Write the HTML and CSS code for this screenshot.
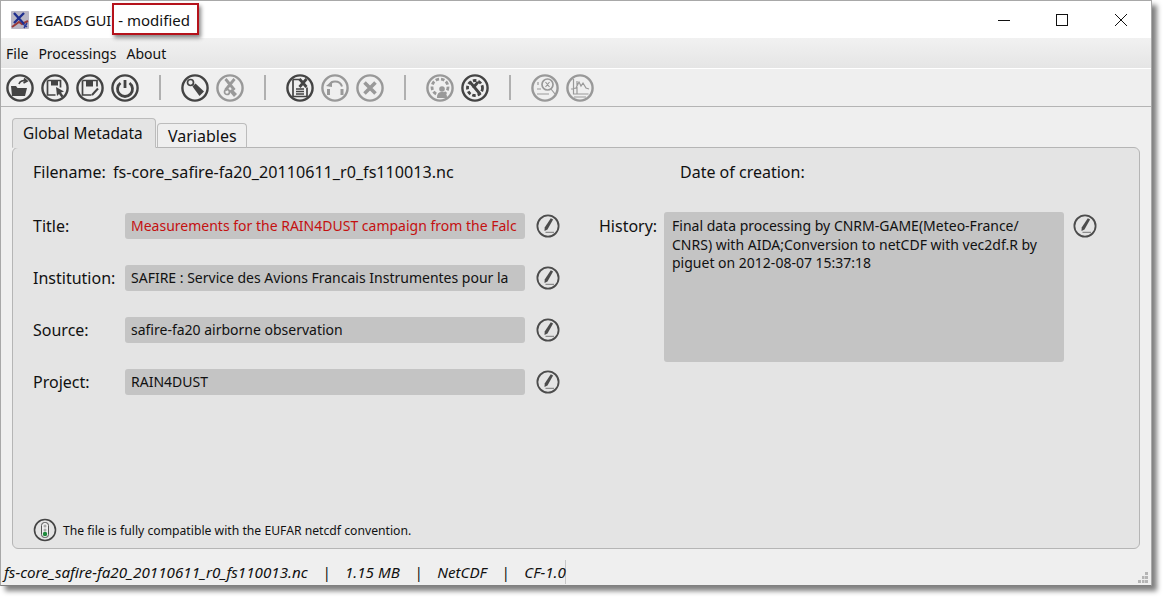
FILE: index.html
```html
<!DOCTYPE html>
<html lang="en">
<head>
<meta charset="utf-8">
<title>EGADS GUI - modified</title>
<link rel="stylesheet" href="styles.css">
</head>
<body>
<svg class="defs" width="0" height="0" aria-hidden="true">
  <defs>
    <symbol id="pen" viewBox="0 0 24 24">
      <circle cx="12" cy="12" r="10.600" fill="none" stroke="#4c4c4c" stroke-width="1.800"/>
      <path d="M14.800 4.300l2.300 1.300-5.600 9.800-3 1.700.2-3.500z" fill="#4c4c4c"/>
      <path d="M9.500 18.300h8.500" stroke="#777" stroke-width="1" fill="none"/>
    </symbol>
  </defs>
</svg>
<div class="window">
  <header class="titlebar">
    <svg class="logo" viewBox="0 0 18 18" width="18" height="18">
      <rect width="18" height="18" rx="1" fill="#b9b6c4"/>
      <path d="M1 16L8 11l3 2 6-3" stroke="#9a3a3a" stroke-width="2" fill="none"/>
      <path d="M3 2l10 11M13 2L3 12" stroke="#1f2f8f" stroke-width="2.400" fill="none"/>
      <path d="M12 13l4 3M16 12l-3 5" stroke="#2a3a9a" stroke-width="1.500" fill="none"/>
    </svg>
    <span class="title-text">EGADS GUI</span>
    <span class="title-mod">- modified</span>
    <div class="controls">
      <div class="ctl"><svg width="14" height="14" viewBox="0 0 14 14"><path d="M1 7.500h12" stroke="#111" fill="none"/></svg></div>
      <div class="ctl"><svg width="14" height="14" viewBox="0 0 14 14"><rect x="1.500" y="1.500" width="11" height="11" stroke="#111" fill="none"/></svg></div>
      <div class="ctl"><svg width="14" height="14" viewBox="0 0 14 14"><path d="M1 1l12 12M13 1L1 13" stroke="#111" fill="none"/></svg></div>
    </div>
  </header>
  <nav class="menubar">
    <span>File</span><span>Processings</span><span>About</span>
  </nav>
  <div class="toolbar">
    <svg class="tool" viewBox="0 0 28 28"><circle cx="14" cy="14" r="12.600"/><path class="f" d="M5 12h5l1.500 2H21l-2 8H6z"/><path class="s" d="M13 10c1-3 4-4 7-3M18 4.500l3 2.500-3.500 2"/></svg>
    <svg class="tool" viewBox="0 0 28 28"><circle cx="14" cy="14" r="12.600"/><path class="s" d="M6.500 6.500h13v7M6.500 6.500v14.500h8"/><rect class="f" x="10" y="6.500" width="7" height="5"/><path class="f" d="M15 13l8 4.500-3 1 2.500 3.500-2 1.500-2.500-3.500-2 2z"/></svg>
    <svg class="tool" viewBox="0 0 28 28"><circle cx="14" cy="14" r="12.600"/><path class="s" d="M6.500 6.500h14.500v6M6.500 6.500v14.500h9"/><rect class="f" x="10" y="6.500" width="7" height="6"/><path class="s w2" d="M16 21l6-6.500"/></svg>
    <svg class="tool" viewBox="0 0 28 28"><circle cx="14" cy="14" r="12.600"/><path class="s w3" d="M14 6v8"/><path class="s w3" d="M9.500 9a7.500 7.500 0 1 0 9 0"/></svg>
    <span class="sep"></span>
    <svg class="tool" viewBox="0 0 28 28"><circle cx="14" cy="14" r="12.600"/><circle class="s" cx="9.500" cy="8.500" r="3"/><path class="f" d="M11.500 12.500l3-3 8.500 8-4.500 4.500z"/></svg>
    <svg class="tool off" viewBox="0 0 28 28"><circle cx="14" cy="14" r="12.600"/><path class="s w3" d="M9.500 5l9 11M18.500 5l-9 11"/><path class="f" d="M13 17l3-2 5 5-3 3z"/><circle class="s" cx="11" cy="18" r="2.500"/></svg>
    <span class="sep"></span>
    <svg class="tool" viewBox="0 0 28 28"><circle cx="14" cy="14" r="12.600"/><path class="s" d="M7 5.500h7M7 5.500v17h14v-9M10 15h8M10 17.500h8M10 20h8"/><path class="s w3" d="M13.500 5l7 8M20.500 5l-7 8"/></svg>
    <svg class="tool off" viewBox="0 0 28 28"><circle cx="14" cy="14" r="12.600"/><path class="s w2" d="M8 12c1-3 3-4.500 6-4.500s6 1.500 7 5"/><path class="f" d="M5 12l6-5v6z"/><rect class="f" x="6" y="15" width="3" height="6"/><rect class="f" x="19.500" y="15" width="3" height="6"/></svg>
    <svg class="tool off" viewBox="0 0 28 28"><circle cx="14" cy="14" r="12.600"/><path class="s w4" d="M8.500 8.500l11 11M19.500 8.500l-11 11"/></svg>
    <span class="sep"></span>
    <svg class="tool off" viewBox="0 0 28 28"><circle cx="14" cy="14" r="12.600"/><circle class="s w3 dash" cx="14" cy="13" r="8"/><circle class="f" cx="16" cy="15" r="2.800"/><path class="f" d="M11 24c0-5 2-6 5-6s5 1 5 6z"/></svg>
    <svg class="tool" viewBox="0 0 28 28"><circle cx="14" cy="14" r="12.600"/><circle class="s w3 dash" cx="14" cy="14" r="7.500"/><path class="s w3" d="M9 8l10 12M12 14l5-6"/></svg>
    <span class="sep"></span>
    <svg class="tool off" viewBox="0 0 28 28"><circle cx="14" cy="14" r="12.600"/><circle class="s" cx="16.500" cy="10.500" r="5.500"/><path class="s w1" d="M14.500 8l4 5M18.500 8l-4 5M20 15l4 5M7 8v3M6 15h4M6 20h12"/></svg>
    <svg class="tool off" viewBox="0 0 28 28"><circle cx="14" cy="14" r="12.600"/><path class="s w1" d="M7.500 5v15h15M11 7v13M5 15l5-1 3-6 2 4 2-3 3 5 3 1M8 23h12"/></svg>
  </div>
  <main class="content">
    <div class="tabs">
      <span class="tab tab-on">Global Metadata</span>
      <span class="tab">Variables</span>
    </div>
    <section class="panel">
      <div class="topline">
        <span class="file-line"><span class="file-key">Filename:</span><span class="file-name">fs-core_safire-fa20_20110611_r0_fs110013.nc</span></span>
        <span>Date of creation:</span>
      </div>
      <div class="columns">
        <div class="left">
          <div class="row">
            <span class="label">Title:</span>
            <div class="field field-red">Measurements for the RAIN4DUST campaign from the Falc</div>
            <svg class="pen" width="24" height="24"><use href="#pen"/></svg>
          </div>
          <div class="row">
            <span class="label">Institution:</span>
            <div class="field">SAFIRE : Service des Avions Francais Instrumentes pour la</div>
            <svg class="pen" width="24" height="24"><use href="#pen"/></svg>
          </div>
          <div class="row">
            <span class="label">Source:</span>
            <div class="field">safire-fa20 airborne observation</div>
            <svg class="pen" width="24" height="24"><use href="#pen"/></svg>
          </div>
          <div class="row">
            <span class="label">Project:</span>
            <div class="field">RAIN4DUST</div>
            <svg class="pen" width="24" height="24"><use href="#pen"/></svg>
          </div>
        </div>
        <div class="right">
          <span class="label-hist">History:</span>
          <div class="history">Final data processing by CNRM-GAME(Meteo-France/<br>CNRS) with AIDA;Conversion to netCDF with vec2df.R by<br>piguet on 2012-08-07 15:37:18</div>
          <svg class="pen" width="24" height="24"><use href="#pen"/></svg>
        </div>
      </div>
      <div class="compat">
        <svg width="24" height="24" viewBox="0 0 24 24">
          <circle cx="12" cy="12" r="10.500" fill="none" stroke="#444" stroke-width="1.600"/>
          <rect x="8.500" y="4.500" width="7" height="15" rx="3" fill="#efefef" stroke="#555"/>
          <circle cx="12" cy="8" r="1.500" fill="#aaa"/>
          <circle cx="12" cy="12" r="1.500" fill="#aaa"/>
          <circle cx="12" cy="16" r="2.200" fill="#1e8a3c"/>
        </svg>
        <span>The file is fully compatible with the EUFAR netcdf convention.</span>
      </div>
    </section>
  </main>
  <footer class="statusbar">
    <span class="status-text"><span>fs-core_safire-fa20_20110611_r0_fs110013.nc</span><span>|</span><span>1.15 MB</span><span>|</span><span>NetCDF</span><span>|</span><span>CF-1.0</span></span>
    <svg class="grip" width="10" height="11" viewBox="0 0 10 11">
      <path fill="#b5b5b5" d="M7 0h3v3H7zM4 4h2.500v3H4zM7 4h3v3H7zM0 8h3v3H0zM4 8h2.500v3H4zM7 8h3v3H7z"/>
    </svg>
  </footer>
</div>
<div class="callout"></div>
</body>
</html>
```
FILE: styles.css
```css
* { box-sizing: border-box; }
html, body { margin: 0; padding: 0; background: #fff; }
body {
  width: 1167px;
  height: 601px;
  overflow: hidden;
  font-family: "Noto Sans", "Liberation Sans", sans-serif;
  font-size: 16px;
  color: #111;
}
.defs { position: absolute; }
.window {
  width: 1152px;
  height: 586px;
  display: flex;
  flex-direction: column;
  background: #efefef;
  border: 1px solid #a8a8a8;
  border-bottom-color: #808080;
  box-shadow: 5px 5px 5px #808080;
}
.titlebar {
  height: 37px;
  flex: none;
  display: flex;
  align-items: center;
  background: #fff;
  padding-left: 10px;
}
.logo { flex: none; }
.title-text { margin-left: 6px; font-size: 14.500px; }
.title-mod { margin-left: 7px; font-size: 15px; }
.controls { margin-left: auto; margin-right: 1px; display: flex; }
.ctl {
  width: 58.500px;
  height: 37px;
  display: flex;
  align-items: center;
  justify-content: center;
}
.menubar {
  height: 31px;
  flex: none;
  display: flex;
  align-items: center;
  gap: 10px;
  padding-left: 5px;
  background: linear-gradient(#f1f1f1, #e5e5e5);
  border-bottom: 1px solid #fff;
  font-size: 14px;
}
.toolbar {
  height: 38px;
  flex: none;
  display: flex;
  align-items: center;
  gap: 7px;
  padding-left: 5px;
  border-bottom: 1px solid #b4b4b4;
  background: #efefef;
}
.tool {
  width: 28px;
  height: 28px;
  flex: none;
  color: #444;
  stroke-width: 1.700;
}
.tool.off { color: #999; }
.tool circle:first-child { fill: none; stroke: currentColor; stroke-width: 2.400; }
.tool .f { fill: currentColor; stroke: none; }
.tool .s { fill: none; stroke: currentColor; }
.tool .w1 { stroke-width: 1.200; }
.tool .w2 { stroke-width: 2; }
.tool .w3 { stroke-width: 2.800; }
.tool .w4 { stroke-width: 3.600; }
.tool .dash { stroke-dasharray: 3.500 2; }
.sep {
  width: 28px;
  height: 25px;
  flex: none;
  display: flex;
  justify-content: center;
}
.sep::before {
  content: "";
  width: 2px;
  background: #b0b0b0;
}
.content {
  flex: none;
  display: flex;
  flex-direction: column;
  padding: 11px 11px 0;
}
.tabs {
  display: flex;
  align-items: flex-end;
  gap: 1px;
  height: 30px;
  flex: none;
  margin-bottom: -1px;
  position: relative;
  z-index: 1;
}
.tab {
  height: 25px;
  width: 90px;
  padding: 0 10px;
  display: flex;
  align-items: center;
  background: #efefef;
  border: 1px solid #bcbcbc;
  border-bottom: 1px solid #b5b5b5;
  border-radius: 4px 4px 0 0;
  white-space: nowrap;
}
.tab-on {
  height: 30px;
  width: 144px;
  font-size: 15.400px;
  background: #e4e4e4;
  border-bottom-color: #e4e4e4;
}
.panel {
  height: 402px;
  flex: none;
  display: flex;
  flex-direction: column;
  background: #e4e4e4;
  border: 1px solid #b5b5b5;
  border-radius: 6px;
  padding: 12px 20px 6px;
}
.topline {
  display: flex;
  height: 24px;
  align-items: center;
  flex: none;
}
.file-line { width: 647px; display: flex; }
.file-key { width: 80px; flex: none; }
.file-name { font-size: 16.150px; }
.columns {
  display: flex;
  margin-top: 29px;
}
.left {
  width: 527px;
  display: flex;
  flex-direction: column;
  gap: 26px;
}
.row {
  display: flex;
  align-items: center;
  height: 26px;
}
.label { width: 92px; flex: none; }
.field {
  width: 400px;
  height: 26px;
  flex: none;
  line-height: 26px;
  padding: 0 6px;
  background: #c4c4c4;
  border-radius: 3px;
  font-size: 14px;
  white-space: nowrap;
}
.field-red { color: #c41010; }
.row .pen { margin-left: 11px; flex: none; }
.right {
  margin-left: 39px;
  margin-top: -1px;
  display: flex;
  align-items: flex-start;
}
.label-hist { width: 65px; flex: none; line-height: 28px; }
.history {
  width: 400px;
  height: 150px;
  flex: none;
  padding: 5px 8px;
  background: #c4c4c4;
  border-radius: 3px;
  font-size: 14px;
  line-height: 18.500px;
  white-space: nowrap;
}
.right .pen { margin-left: 9px; margin-top: 2px; flex: none; }
.compat {
  margin-top: auto;
  display: flex;
  align-items: center;
  gap: 6px;
  font-size: 12.200px;
}
.statusbar {
  flex: 1;
  min-height: 0;
  display: flex;
  align-items: flex-end;
  padding: 0 3px 0 3px;
}
.status-text {
  display: flex;
  gap: 14.500px;
  width: 562px;
  font-style: italic;
  font-size: 15.200px;
  white-space: nowrap;
  height: 24px;
  line-height: 24px;
  border-right: 1px solid #c8c8c8;
  margin-bottom: 1px;
}
.grip { margin-left: auto; margin-bottom: 2px; }
.callout {
  position: absolute;
  left: 112px;
  top: 3px;
  width: 87px;
  height: 32px;
  border: 2px solid #b5121b;
  box-shadow: 2px 3px 4px #888;
}
```
